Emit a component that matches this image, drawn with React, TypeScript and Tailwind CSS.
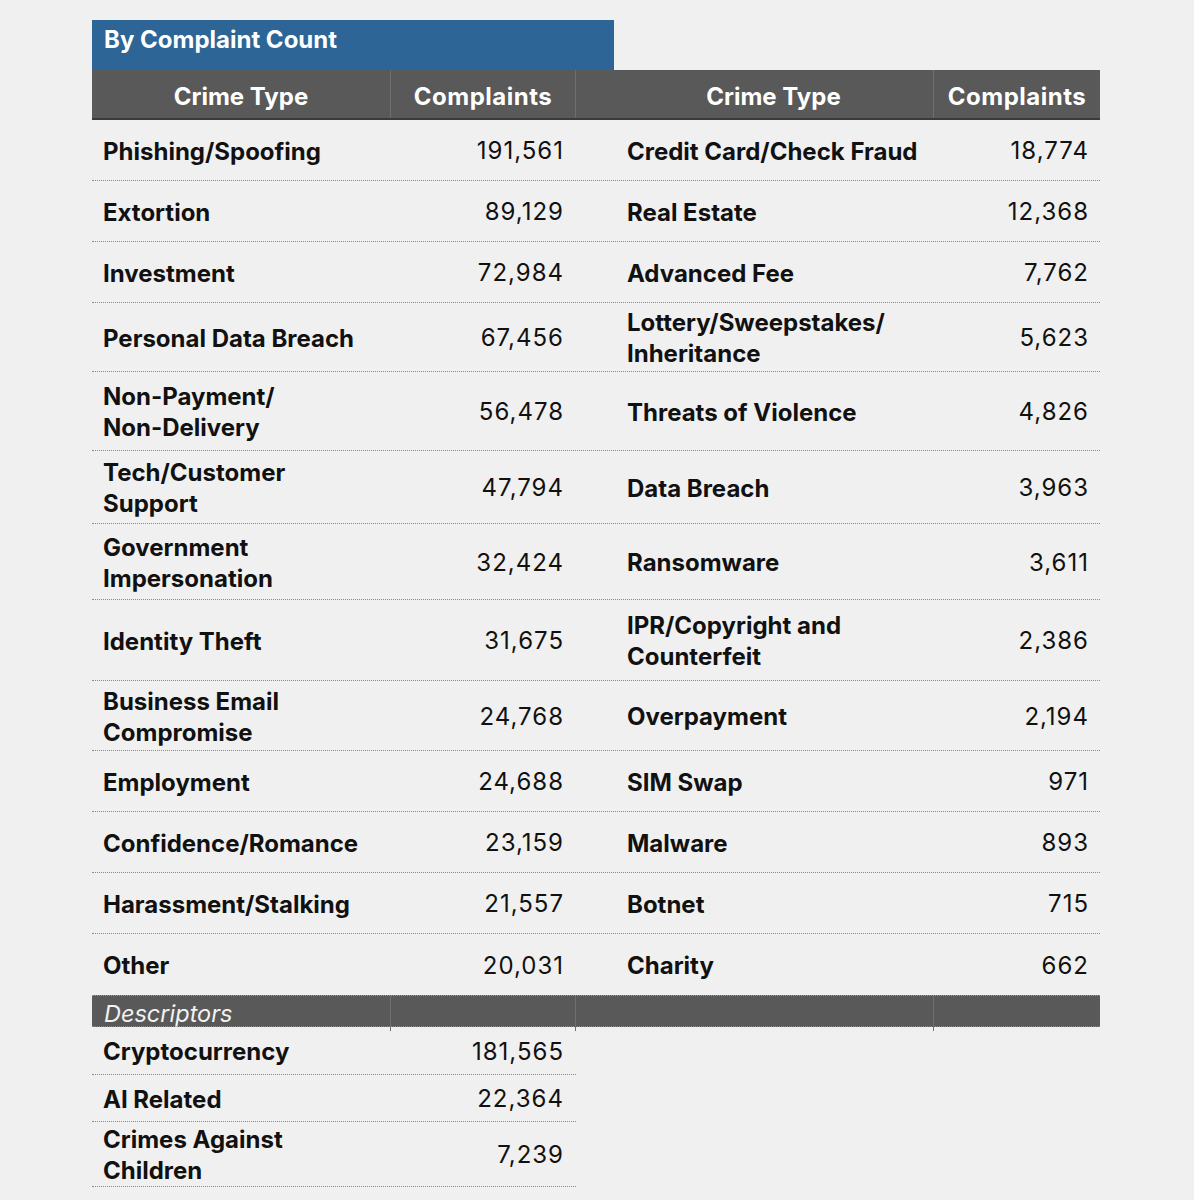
import React from "react";

type Row = { h: string; a: string[]; an: string; b: string[]; bn: string };

const rows: Row[] = [
  { h: "h-[61px]", a: ["Phishing/Spoofing"], an: "191,561", b: ["Credit Card/Check Fraud"], bn: "18,774" },
  { h: "h-[61px]", a: ["Extortion"], an: "89,129", b: ["Real Estate"], bn: "12,368" },
  { h: "h-[61px]", a: ["Investment"], an: "72,984", b: ["Advanced Fee"], bn: "7,762" },
  { h: "h-[69px]", a: ["Personal Data Breach"], an: "67,456", b: ["Lottery/Sweepstakes/", "Inheritance"], bn: "5,623" },
  { h: "h-[79px]", a: ["Non-Payment/", "Non-Delivery"], an: "56,478", b: ["Threats of Violence"], bn: "4,826" },
  { h: "h-[73px]", a: ["Tech/Customer", "Support"], an: "47,794", b: ["Data Breach"], bn: "3,963" },
  { h: "h-[76px]", a: ["Government", "Impersonation"], an: "32,424", b: ["Ransomware"], bn: "3,611" },
  { h: "h-[81px]", a: ["Identity Theft"], an: "31,675", b: ["IPR/Copyright and", "Counterfeit"], bn: "2,386" },
  { h: "h-[70px]", a: ["Business Email", "Compromise"], an: "24,768", b: ["Overpayment"], bn: "2,194" },
  { h: "h-[61px]", a: ["Employment"], an: "24,688", b: ["SIM Swap"], bn: "971" },
  { h: "h-[61px]", a: ["Confidence/Romance"], an: "23,159", b: ["Malware"], bn: "893" },
  { h: "h-[61px]", a: ["Harassment/Stalking"], an: "21,557", b: ["Botnet"], bn: "715" },
  { h: "h-[61px]", a: ["Other"], an: "20,031", b: ["Charity"], bn: "662" },
];

const desc = [
  { h: "h-[48px]", a: ["Cryptocurrency"], n: "181,565" },
  { h: "h-[47px]", a: ["AI Related"], n: "22,364" },
  { h: "h-[65px]", a: ["Crimes Against", "Children"], n: "7,239" },
];

function Label({ lines }: { lines: string[] }) {
  return (
    <div className="flex flex-col font-bold text-[24px] leading-[31px] text-[#111]">
      {lines.map((l, i) => (
        <span key={i}>{l}</span>
      ))}
    </div>
  );
}

const num = "flex items-center justify-end pt-[2px] text-[24px] tracking-[1px] text-[#111]";

export default function App() {
  return (
    <div
      className="min-h-[1200px] w-[1194px] bg-[#f0f0f0] pt-[20px] pl-[92px]"
      style={{ fontFamily: "Inter, 'Noto Sans', sans-serif" }}
    >
      <div className="w-[1008px]">
        <div className="h-[50px] w-[522px] bg-[#2c6596] pl-[12px] pt-[4px] text-[24px] font-bold leading-[31px] text-white">
          By Complaint Count
        </div>
        <div className="grid h-[50px] grid-cols-[299px_185px_358px_166px] border-b-2 border-[#3a3a3a] bg-[#595959] text-[24px] font-bold text-white">
          <div className="flex items-center justify-center border-r border-[#6e6e6e] pt-[5px]">Crime Type</div>
          <div className="flex items-center justify-center border-r border-[#6e6e6e] pt-[5px] tracking-[0.5px]">Complaints</div>
          <div className="flex items-center justify-center border-r border-[#6e6e6e] pl-[38px] pt-[5px]">Crime Type</div>
          <div className="flex items-center justify-center pt-[5px] tracking-[0.5px]">Complaints</div>
        </div>
        {rows.map((r, i) => (
          <div
            key={i}
            className={`grid grid-cols-[299px_185px_38px_320px_166px] ${r.h} ${
              i < rows.length - 1 ? "border-b border-dotted border-[#8a8a8a]" : ""
            }`}
          >
            <div className="flex items-center pl-[11px] pt-[2px]">
              <Label lines={r.a} />
            </div>
            <div className={`${num} pr-[12px]`}>{r.an}</div>
            <div />
            <div className="flex items-center pl-[13px] pt-[2px]">
              <Label lines={r.b} />
            </div>
            <div className={`${num} pr-[11px]`}>{r.bn}</div>
          </div>
        ))}
        <div className="grid h-[32px] grid-cols-[299px_185px_358px_166px] border-t border-dotted border-[#9a9a9a] border-b border-b-[#8a8a8a] bg-[#595959]">
          <div className="flex items-center border-r border-[#6e6e6e] pl-[12px] text-[23.5px] italic text-[#f2f2f2]">
            Descriptors
          </div>
          <div className="border-r border-[#6e6e6e]" />
          <div className="border-r border-[#6e6e6e]" />
          <div />
        </div>
        <div className="w-[484px]">
          {desc.map((d, i) => (
            <div
              key={i}
              className={`grid grid-cols-[299px_185px] border-b border-dotted border-[#8a8a8a] ${d.h}`}
            >
              <div className="flex items-center pl-[11px] pt-[2px]">
                <Label lines={d.a} />
              </div>
              <div className={`${num} pr-[12px]`}>{d.n}</div>
            </div>
          ))}
        </div>
      </div>
    </div>
  );
}
